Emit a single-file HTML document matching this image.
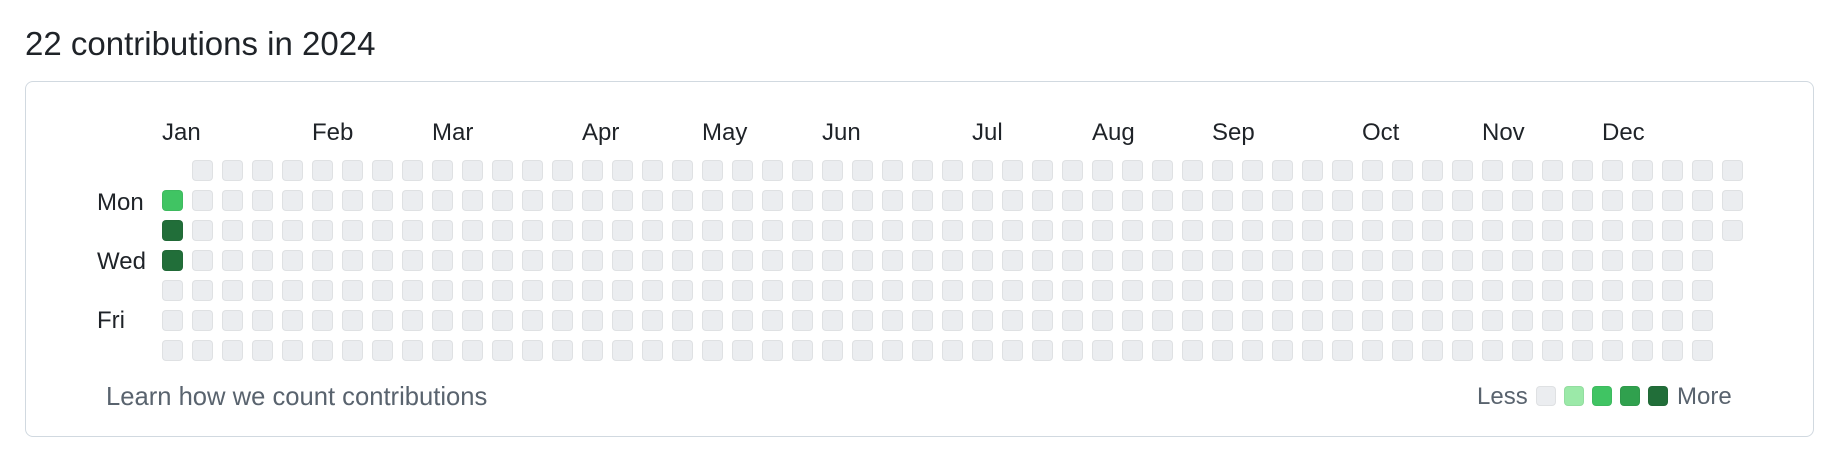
<!DOCTYPE html>
<html><head><style>
body{margin:0;width:1840px;height:465px;background:#fff;font-family:"Liberation Sans",sans-serif;color:#1f2328;position:relative;overflow:hidden}
.t{position:absolute;left:25px;top:24px;font-size:33px;line-height:40px}
.box{position:absolute;left:25px;top:81px;width:1789px;height:356px;border:1.5px solid #d1d9e0;border-radius:8px;box-sizing:border-box}
.m{position:absolute;top:119px;font-size:24px;line-height:28px}
.d{position:absolute;font-size:24px;line-height:28px;left:97px}
.c{position:absolute;width:21px;height:21px;border-radius:4px;background:#ebedf0;box-shadow:inset 0 0 0 1px rgba(31,35,40,.06)}
.f{position:absolute;top:382px;font-size:24px;line-height:30px;color:#59636e}
</style></head><body>
<div class="t">22 contributions in 2024</div>
<div class="box"></div>
<div id="g"></div>
<div class="m" style="left:162px">Jan</div>
<div class="m" style="left:312px">Feb</div>
<div class="m" style="left:432px">Mar</div>
<div class="m" style="left:582px">Apr</div>
<div class="m" style="left:702px">May</div>
<div class="m" style="left:822px">Jun</div>
<div class="m" style="left:972px">Jul</div>
<div class="m" style="left:1092px">Aug</div>
<div class="m" style="left:1212px">Sep</div>
<div class="m" style="left:1362px">Oct</div>
<div class="m" style="left:1482px">Nov</div>
<div class="m" style="left:1602px">Dec</div>
<div class="d" style="top:189px">Mon</div>
<div class="d" style="top:248px">Wed</div>
<div class="d" style="top:307px">Fri</div>
<div class="f" style="left:106px;font-size:25.6px">Learn how we count contributions</div>
<div class="f" style="left:1477px">Less</div>
<div class="c" style="left:1536px;top:386px;width:20px;height:20px"></div>
<div class="c" style="left:1564px;top:386px;width:20px;height:20px;background:#9be9a8"></div>
<div class="c" style="left:1592px;top:386px;width:20px;height:20px;background:#40c463"></div>
<div class="c" style="left:1620px;top:386px;width:20px;height:20px;background:#30a14e"></div>
<div class="c" style="left:1648px;top:386px;width:20px;height:20px;background:#216e39"></div>
<div class="f" style="left:1677px">More</div>
<script>
var h='';
for(var k=0;k<53;k++)for(var r=0;r<7;r++){
 if(k==0&&r==0)continue;
 if(k==52&&r>2)continue;
 var bg='';
 if(k==0&&r==1)bg='background:#40c463;';
 if(k==0&&(r==2||r==3))bg='background:#216e39;';
 h+='<div class="c" style="left:'+(162+30*k)+'px;top:'+(160+30*r)+'px;'+bg+'"></div>';
}
document.getElementById('g').innerHTML=h;
</script>
</body></html>
